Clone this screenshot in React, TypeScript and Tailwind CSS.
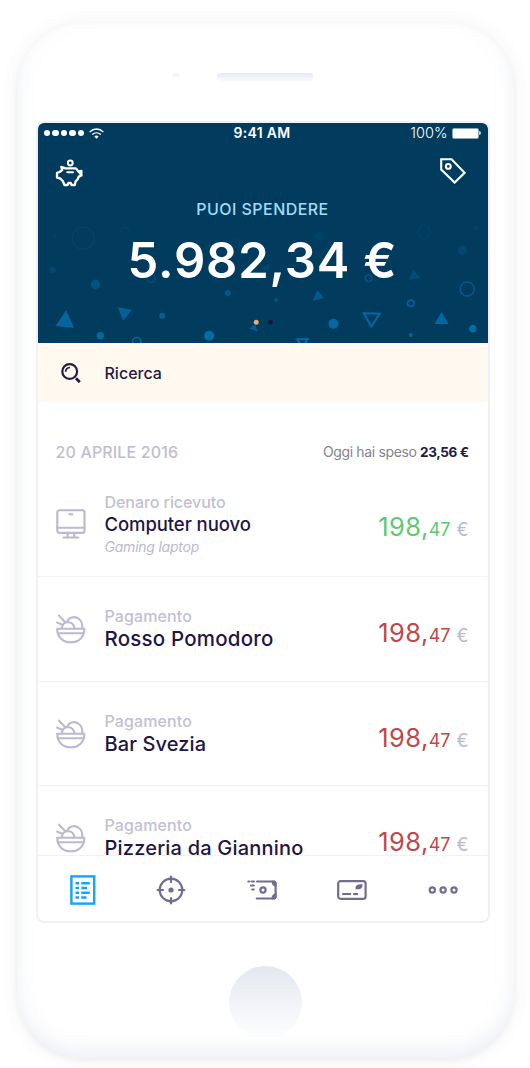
import React from "react";

type IconProps = { className?: string };

function PiggyIcon({ className }: IconProps) {
  return (
    <svg viewBox="0 0 28 28" className={className} fill="none" stroke="currentColor" strokeWidth="2.3" strokeLinejoin="round" strokeLinecap="round">
      <circle cx="15.3" cy="4" r="2.4" strokeWidth="2" />
      <path d="M6.3 7.8 10.5 9.3H20.5C22 10.2 22.6 11.3 23.2 12.6L26.4 12V16.4L23.8 17.6C23.2 20 22 21.3 20.6 22.4L19.8 26H16.4L15.8 24H13.4L12.6 26H9.4L7.8 22 5 19.4 2 18.6V13.8L4.6 13 7.2 11Z" />
      <path d="M12.2 13.2H18" strokeWidth="2" />
      <path d="M24.2 13.2 26 16" />
    </svg>
  );
}

function TagIcon({ className }: IconProps) {
  return (
    <svg viewBox="0 0 26 26" className={className} fill="none" stroke="currentColor" strokeWidth="2.1" strokeLinejoin="miter">
      <path d="M1.2 1.3H11.6L24.6 14.8 14.6 24.6 1.2 11.6Z" />
      <circle cx="8.3" cy="8.4" r="2.4" />
    </svg>
  );
}

function WifiIcon({ className }: IconProps) {
  return (
    <svg viewBox="0 0 15 11" className={className} fill="none" stroke="currentColor" strokeWidth="1.4">
      <path d="M.7 3.9C4.6.1 10.4.1 14.3 3.9" />
      <path d="M3.2 6.6C5.7 4.3 9.3 4.3 11.8 6.6" />
      <path d="M5.3 8.5C6.5 7.3 8.5 7.3 9.7 8.5L7.5 10.8Z" fill="currentColor" stroke="none" />
    </svg>
  );
}

function SearchIcon({ className }: IconProps) {
  return (
    <svg viewBox="0 0 20 20" className={className} fill="none" stroke="currentColor" strokeWidth="2.2">
      <circle cx="8.7" cy="8.5" r="7.4" />
      <path d="M4.6 8.8C4.7 6.1 6.3 4.6 9 4.5" strokeWidth="1.7" />
      <path d="M15 15.2 18.8 19.2" strokeWidth="2.8" />
    </svg>
  );
}

function ComputerIcon({ className }: IconProps) {
  return (
    <svg viewBox="0 0 30 30" className={className} fill="none" stroke="currentColor" strokeWidth="2.1" strokeLinecap="round">
      <rect x="1.3" y="1.3" width="27.2" height="22.6" rx="2.2" />
      <path d="M1.3 18.8H28.5M13.2 5.2H16.4M11.6 24V28M18.2 24V28M7.6 28.5H22.4" />
    </svg>
  );
}

function BowlIcon({ className }: IconProps) {
  return (
    <svg viewBox="0 0 30 30" className={className} fill="none" stroke="currentColor" strokeWidth="2.1" strokeLinecap="round" strokeLinejoin="round">
      <path d="M1.2 14.8H28.4C28.4 23.2 22.6 28.3 14.8 28.3S1.2 23.2 1.2 14.8Z" />
      <path d="M2.5 19.3H27.1" />
      <path d="M26.2 14C27 6.8 21.8 2.5 17 3.2 14.3 3.5 12.2 5.3 11.2 7.6" />
      <path d="M5.9 14C6.1 10.4 8.7 8.2 12.2 8.3S17.8 10.6 18.4 14" />
      <path d="M3 1.6 9 8M1.2 8.6 6.4 10.8" />
    </svg>
  );
}

function ListIcon({ className }: IconProps) {
  return (
    <svg viewBox="0 0 26 30" className={className} fill="none" stroke="currentColor" strokeWidth="2.4">
      <rect x="1.4" y="1.4" width="22.8" height="27.2" />
      <path d="M5.5 8.2H9M11.3 8.2H19.8M5.5 13H9M11.3 13H17M5.5 17.7H9M11.3 17.7H19.8M5.5 22.5H9M11.3 22.5H16.5" strokeWidth="2.4" />
    </svg>
  );
}

function TargetIcon({ className }: IconProps) {
  return (
    <svg viewBox="0 0 30 30" className={className} fill="none" stroke="currentColor" strokeWidth="2.2" strokeLinecap="round">
      <circle cx="15" cy="15" r="11.3" />
      <circle cx="15" cy="15" r="2.6" fill="currentColor" stroke="none" />
      <path d="M15 1.6V7M15 23V28.4M1.6 15H7M23 15H28.4" />
    </svg>
  );
}

function CashIcon({ className }: IconProps) {
  return (
    <svg viewBox="0 0 30 20" className={className} fill="none" stroke="currentColor" strokeWidth="2.2" strokeLinecap="round">
      <path d="M10 1.5H26.2C27.8 1.5 28.6 2.4 28.6 3.8V16.2C28.6 17.7 27.8 18.5 26.2 18.5H9.8" />
      <path d="M25.3 1.5C25.3 4.3 26.4 5.5 28.8 5.8V2.5L27.5 1.3ZM25.3 18.5C25.3 15.7 26.4 14.5 28.8 14.2V17.5L27.5 18.7Z" fill="currentColor" strokeWidth="1.4" />
      <circle cx="16" cy="10" r="2.6" strokeWidth="2.2" />
      <path d="M1.3 1.5H2.4M4.7 1.5H7M3.9 5.5H6.8M5.2 9.5H6.8" strokeWidth="2" />
    </svg>
  );
}

function CardIcon({ className }: IconProps) {
  return (
    <svg viewBox="0 0 30 20" className={className} fill="none" stroke="currentColor" strokeWidth="2.2" strokeLinecap="round">
      <rect x="1.2" y="1.2" width="27.4" height="17.6" rx="2.4" />
      <path d="M6 14H13.2M17 14H20.2" />
      <path d="M18.6 9.4C18 6.6 19.4 4.9 21.6 4.5L25.4 4.1C25.9 7 24.8 8.6 22.6 9.2 21.3 9.5 20 9 18.6 9.4Z" fill="currentColor" stroke="none" />
    </svg>
  );
}

function MoreIcon({ className }: IconProps) {
  return (
    <svg viewBox="0 0 30 10" className={className} fill="none" stroke="currentColor" strokeWidth="2.2">
      <circle cx="4.3" cy="5" r="2.6" />
      <circle cx="15.1" cy="5" r="2.6" />
      <circle cx="26" cy="5" r="2.6" />
    </svg>
  );
}

function Confetti({ className }: IconProps) {
  return (
    <svg viewBox="0 0 450 220" className={className} fill="none">
      <g stroke="#0878b8" strokeWidth="1.6">
        <circle cx="45.2" cy="115.3" r="11" opacity=".15" />
        <circle cx="86.8" cy="108.7" r="4.3" opacity=".1" />
        <circle cx="197.5" cy="119.7" r="4.5" opacity=".12" />
        <circle cx="113.2" cy="155.3" r="4" opacity=".3" />
        <circle cx="98.8" cy="218.7" r="4.2" opacity=".75" />
        <circle cx="386.2" cy="108.7" r="6" opacity=".12" />
        <circle cx="429.2" cy="166" r="7" opacity=".5" />
        <circle cx="330.5" cy="155.3" r="3.3" opacity=".4" />
        <circle cx="372.8" cy="180.3" r="3.2" opacity=".65" />
        <path d="M325.8 190.3 341.8 190.8 333.3 203.5Z" opacity=".75" strokeWidth="2" />
        <path d="M259 216.5 269.5 216 265 224Z" opacity=".8" strokeWidth="2" />
      </g>
      <g fill="#0878b8">
        <path d="M14 111.5 20 112 16.5 116.5Z" opacity=".12" />
        <circle cx="14.8" cy="147" r="3" opacity=".25" />
        <circle cx="57.5" cy="161.3" r="4.8" opacity=".4" />
        <path d="M28.2 187.3 17.5 203 36.2 205Z" opacity=".7" />
        <path d="M79.8 184.3 93.8 187 85.2 197.7Z" opacity=".65" />
        <circle cx="124.2" cy="192.7" r="3" opacity=".6" />
        <circle cx="189.8" cy="170" r="3" opacity=".45" />
        <circle cx="62.2" cy="212.7" r="3.7" opacity=".75" />
        <circle cx="171.2" cy="212.7" r="5" opacity=".8" />
        <path d="M217 201 211.5 205.7 219.5 208.3Z" opacity=".6" />
        <path d="M231.8 140 222.5 145.5 231 148Z" opacity=".2" />
        <circle cx="281.2" cy="112.7" r="4.7" opacity=".12" />
        <circle cx="424.5" cy="127.3" r="4.7" opacity=".2" />
        <path d="M375.2 146.7 370.8 157 382.2 154.7Z" opacity=".3" />
        <path d="M279.2 167 274.5 178 285.8 175Z" opacity=".5" />
        <circle cx="238.2" cy="177" r="2" opacity=".4" />
        <circle cx="350" cy="137.7" r="2" opacity=".2" />
        <circle cx="438" cy="105.3" r="2.5" opacity=".12" />
        <circle cx="295.5" cy="200.7" r="5" opacity=".75" />
        <path d="M403.5 189 396.5 201 410.5 201Z" opacity=".75" />
        <circle cx="372.8" cy="212" r="2" opacity=".7" />
        <circle cx="434.8" cy="205.7" r="3.7" opacity=".8" />
      </g>
      <circle cx="218.2" cy="199.2" r="2.5" fill="#f3a969" />
      <circle cx="232.5" cy="199.2" r="2.4" fill="#1c1442" />
    </svg>
  );
}

function Amount({ tone }: { tone: string }) {
  return (
    <div className={`flex items-baseline leading-8 ${tone}`}>
      <span className="text-[25.5px] tracking-[0.4px]">198,</span>
      <span className="text-[18px]">47</span>
      <span className="ml-[6px] text-[18px] text-[#bcb8d0]">€</span>
    </div>
  );
}

function Payment({ title, titleClass, rowClass }: { title: string; titleClass: string; rowClass: string }) {
  return (
    <div className={`flex shrink-0 items-start pl-[18px] pr-[19px] ${rowClass}`}>
      <BowlIcon className="mt-[37px] h-[30px] w-[30px] text-[#bcb8d0]" />
      <div className="ml-[19px] flex-1 whitespace-nowrap pt-7">
        <div className="text-[16px] font-medium leading-[22px] tracking-[0.12px] text-[#c3c0d4]">Pagamento</div>
        <div className={`font-medium leading-6 text-[#1e1646] ${titleClass}`}>{title}</div>
      </div>
      <div className="mt-10"><Amount tone="text-[#c1474a]" /></div>
    </div>
  );
}

export default function App() {
  return (
    <main className="flex h-[1068px] w-[530px] justify-center overflow-hidden bg-white pt-[23px] font-['Inter',sans-serif]">
      <div className="flex h-[1035px] w-[497px] flex-col items-start rounded-[66px] bg-white shadow-[0_0_22px_rgba(0,0,0,0.05),0_3px_6px_rgba(0,0,0,0.045),inset_0_-12px_20px_-4px_rgba(232,235,243,0.5),inset_0_-4px_14px_rgba(236,240,247,0.5)]">
        <div className="flex h-[98px] w-full items-start pl-[155px] pt-[50px]">
          <span className="h-2 w-2 rounded-full bg-gradient-to-b from-[#f1f3f6] to-white" />
          <span className="ml-[37px] h-2 w-24 rounded-[3px] bg-gradient-to-b from-[#e8eaf2] to-[#fafafd]" />
        </div>
        <section className="ml-[19px] flex h-[802px] w-[454px] shrink-0 flex-col overflow-hidden rounded-[8px] border-2 border-[#f0f0f8] bg-white">
          <header className="relative flex h-[220px] shrink-0 flex-col rounded-t-[5px] bg-[#013b5e] text-white">
            <Confetti className="absolute left-0 top-0 h-[220px] w-[450px]" />
            <div className="relative grid h-[20px] grid-cols-3 items-center pl-[6px] pr-[7px] text-[14px] leading-5">
              <div className="flex items-center gap-[2px]">
                {[0, 1, 2, 3, 4].map((dot) => (
                  <span key={dot} className="h-[6.5px] w-[6.5px] rounded-full bg-white" />
                ))}
                <WifiIcon className="ml-[3px] h-[11px] w-[15px]" />
              </div>
              <span className="text-center font-semibold tracking-[0.3px]">9:41 AM</span>
              <div className="flex items-center justify-end">
                <span className="text-[14.5px] font-light">100%</span>
                <span className="ml-[4px] h-[11px] w-[27px] rounded-[2px] border border-[#8aa4b4] bg-white" />
                <span className="h-1 w-[2px] rounded-r bg-[#c6d3db]" />
              </div>
            </div>
            <div className="relative flex justify-between pl-[17px] pr-[22px] pt-[14px]">
              <PiggyIcon className="mt-[2px] h-7 w-7" />
              <TagIcon className="mt-px h-[26px] w-[26px]" />
            </div>
            <div className="relative mt-[10px] text-center text-[16px] font-medium leading-6 tracking-[0.45px] text-[#a4dcf8]">PUOI SPENDERE</div>
            <div className="relative mt-[10px] whitespace-nowrap text-center text-[49px] font-semibold leading-[60px] tracking-[0.8px]">5.982,34 €</div>
          </header>
          <div className="flex h-[59px] shrink-0 items-center bg-[#fff9f0] pl-[23px] text-[#231a45]">
            <SearchIcon className="h-5 w-5" />
            <span className="ml-[24px] text-[16px] font-medium">Ricerca</span>
          </div>
          <div className="flex min-h-0 flex-1 flex-col">
            <div className="flex h-[89px] shrink-0 items-center justify-between whitespace-nowrap pl-[18px] pr-[19px] pt-[10px]">
              <h2 className="text-[16px] font-medium tracking-[0.15px] text-[#c0bdd2]">20 APRILE 2016</h2>
              <p className="text-[14px] tracking-[-0.36px] text-[#85838f]">Oggi hai speso <b className="text-[13.5px] tracking-[-0.4px] text-[#231a45]">23,56 €</b></p>
            </div>
            <div className="flex h-[86px] shrink-0 items-start border-b border-[#f3f3f8] pl-[18px] pr-[19px]">
              <ComputerIcon className="mt-[18px] h-[30px] w-[30px] text-[#bcb8d0]" />
              <div className="ml-[19px] flex-1 whitespace-nowrap">
                <div className="text-[16px] font-medium leading-[22px] tracking-[-0.06px] text-[#c3c0d4]">Denaro ricevuto</div>
                <div className="text-[18.5px] font-medium leading-[22px] tracking-[-0.08px] text-[#1e1646]">Computer nuovo</div>
                <div className="mt-px text-[14px] italic leading-[22px] tracking-[-0.22px] text-[#bcb8d0]">Gaming laptop</div>
              </div>
              <div className="mt-5"><Amount tone="text-[#5cc974]" /></div>
            </div>
            <Payment title="Rosso Pomodoro" titleClass="text-[20.5px] tracking-[0.2px]" rowClass="h-[105px] border-b border-[#f3f3f8]" />
            <Payment title="Bar Svezia" titleClass="text-[20px] tracking-[0.1px]" rowClass="h-[104px] border-b border-[#f3f3f8]" />
            <Payment title="Pizzeria da Giannino" titleClass="text-[20px] tracking-[0.2px]" rowClass="h-[105px]" />
          </div>
          <nav className="flex h-[66px] shrink-0 items-center justify-between border-t border-[#f1f1f6] pl-[32px] pr-[30px] pt-[3px] text-[#746b91]">
            <ListIcon className="h-[30px] w-[26px] text-[#10a5ff]" />
            <TargetIcon className="h-[30px] w-[30px]" />
            <CashIcon className="h-[20px] w-[30px]" />
            <CardIcon className="h-[20px] w-[30px]" />
            <MoreIcon className="h-[10px] w-[30px]" />
          </nav>
        </section>
        <div className="ml-[212px] mt-[43px] h-[73px] w-[73px] shrink-0 rounded-full bg-gradient-to-b from-[#e4e7f0] to-transparent" />
      </div>
    </main>
  );
}
